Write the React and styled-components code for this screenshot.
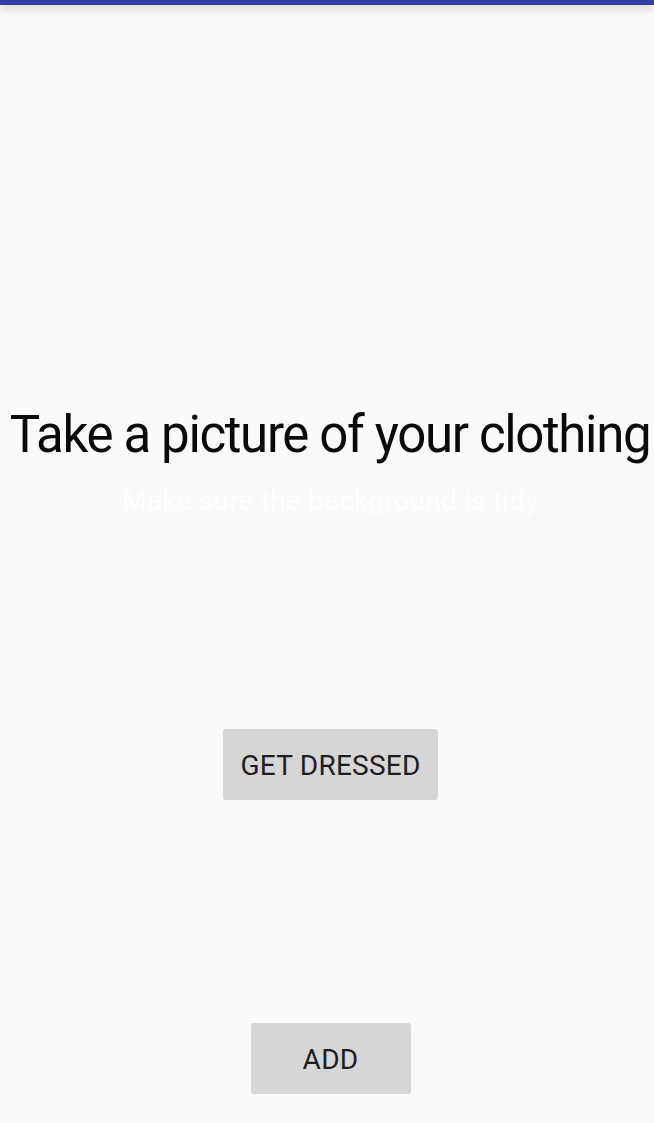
import React from "react";
import styled, { createGlobalStyle } from "styled-components";

const Global = createGlobalStyle`
  html, body { margin: 0; padding: 0; background: #fafafa; }
  body { font-family: Roboto, "Noto Sans", sans-serif; }
`;

const Screen = styled.div`
  width: 654px;
  height: 1123px;
  background: #fafafa;
  display: flex;
  flex-direction: column;
  align-items: center;
  overflow: hidden;
`;

const StatusBar = styled.div`
  align-self: stretch;
  height: 5px;
  background: #303f9f;
  box-shadow: 0 2px 8px rgba(0, 0, 0, 0.18), 0 6px 10px rgba(0, 0, 0, 0.05);
`;

const Title = styled.h1`
  margin: 400px 0 0 6px;
  font-size: 51px;
  font-weight: 400;
  line-height: 60px;
  letter-spacing: -1.35px;
  color: #0a0a0a;
  white-space: nowrap;
`;

const Subtitle = styled.p`
  margin: 20px 0 0 7px;
  font-size: 28px;
  line-height: 32px;
  letter-spacing: 0.2px;
  color: #ffffff;
  white-space: nowrap;
`;

const Button = styled.button`
  margin-top: ${(p) => p.$gap}px;
  margin-left: 7px;
  width: ${(p) => p.$w}px;
  height: 71px;
  border: none;
  border-radius: 3px;
  background: #d6d6d6;
  color: #1e1e1e;
  font-family: Roboto, sans-serif;
  font-size: 28px;
  font-weight: 400;
  letter-spacing: 0.25px;
  padding: 2px 0 0;
  display: flex;
  align-items: center;
  justify-content: center;
`;

export default function App() {
  return (
    <>
      <Global />
      <Screen>
        <StatusBar />
        <Title>Take a picture of your clothing</Title>
        <Subtitle>Make sure the background is tidy</Subtitle>
        <Button $w={215} $gap={212}>GET DRESSED</Button>
        <Button $w={160} $gap={223}>ADD</Button>
      </Screen>
    </>
  );
}
